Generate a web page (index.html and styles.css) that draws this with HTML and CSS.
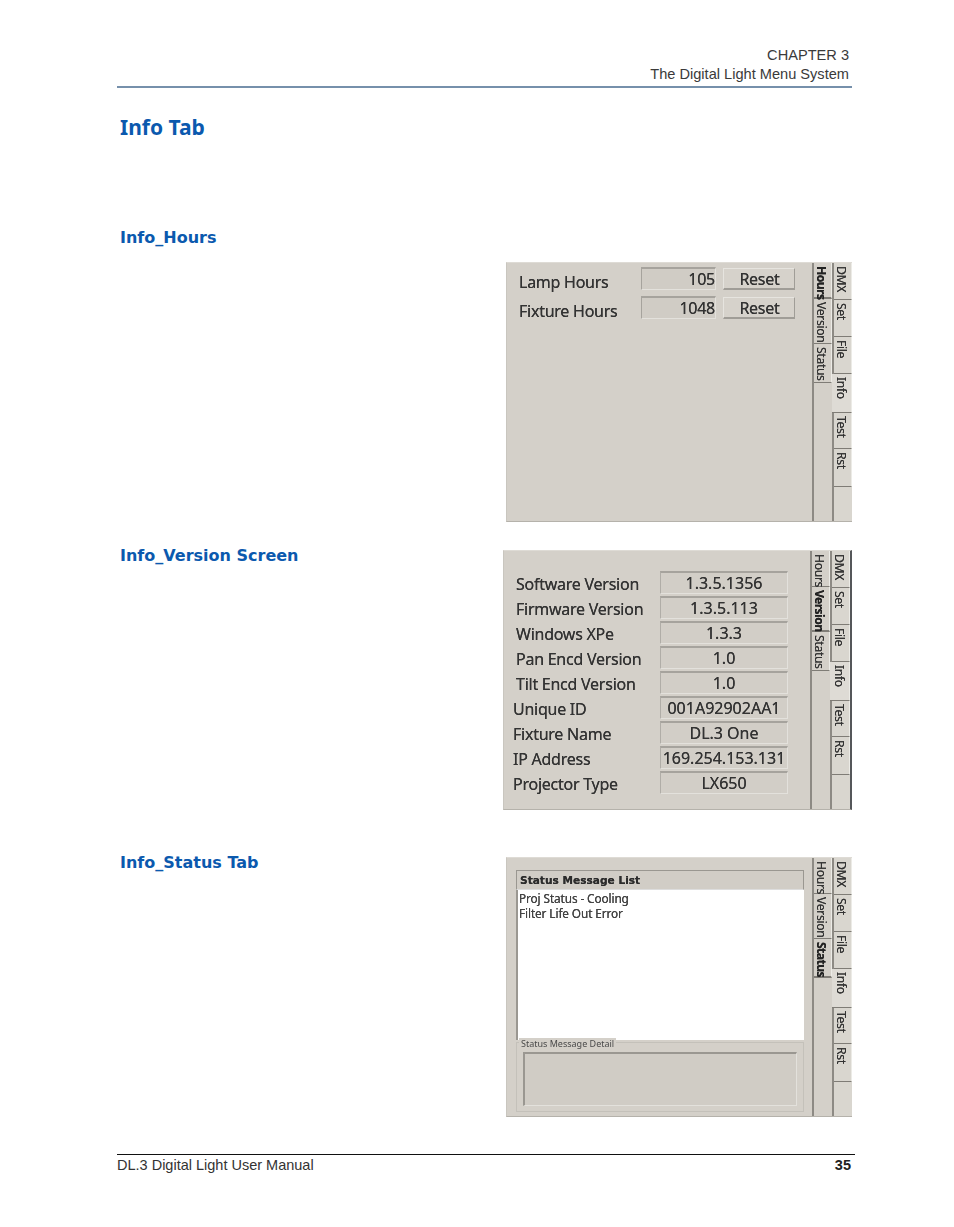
FILE: index.html
```html
<!DOCTYPE html>
<html lang="en">
<head>
<meta charset="utf-8">
<title>Info Tab</title>
<link rel="stylesheet" href="styles.css">
</head>
<body>
<div class="page">
  <header class="running-head">
    <div>CHAPTER 3</div>
    <div>The Digital Light Menu System</div>
  </header>
  <h1 class="title">Info Tab</h1>
  <h2 class="sub hours-head">Info_Hours</h2>
  <section class="hours-row">
    <div class="panel">
      <div class="main hours-main">
        <div class="hrow"><span class="hlabel">Lamp Hours</span><span class="hfield">105</span><span class="hbtn">Reset</span></div>
        <div class="hrow"><span class="hlabel">Fixture Hours</span><span class="hfield">1048</span><span class="hbtn">Reset</span></div>
      </div>
      <div class="subtabs">
        <div class="tab active">Hours</div><div class="tab">Version</div><div class="tab">Status</div>
      </div>
      <div class="tabs">
        <div class="tab">DMX</div><div class="tab">Set</div><div class="tab">File</div><div class="tab sel">Info</div><div class="tab">Test</div><div class="tab">Rst</div>
      </div>
    </div>
  </section>
  <section class="split version-row">
    <h2 class="sub">Info_Version Screen</h2>
    <div class="panel panel-wide">
      <div class="main version-main">
        <div class="vrow"><span class="vlabel">Software Version</span><span class="vfield">1.3.5.1356</span></div>
        <div class="vrow"><span class="vlabel">Firmware Version</span><span class="vfield">1.3.5.113</span></div>
        <div class="vrow"><span class="vlabel">Windows XPe</span><span class="vfield">1.3.3</span></div>
        <div class="vrow"><span class="vlabel">Pan Encd Version</span><span class="vfield">1.0</span></div>
        <div class="vrow"><span class="vlabel">Tilt Encd Version</span><span class="vfield">1.0</span></div>
        <div class="vrow out"><span class="vlabel">Unique ID</span><span class="vfield">001A92902AA1</span></div>
        <div class="vrow out"><span class="vlabel">Fixture Name</span><span class="vfield">DL.3 One</span></div>
        <div class="vrow out"><span class="vlabel">IP Address</span><span class="vfield">169.254.153.131</span></div>
        <div class="vrow out"><span class="vlabel">Projector Type</span><span class="vfield">LX650</span></div>
      </div>
      <div class="subtabs">
        <div class="tab">Hours</div><div class="tab active">Version</div><div class="tab">Status</div>
      </div>
      <div class="tabs">
        <div class="tab">DMX</div><div class="tab">Set</div><div class="tab">File</div><div class="tab sel">Info</div><div class="tab">Test</div><div class="tab">Rst</div>
      </div>
    </div>
  </section>
  <section class="split status-row">
    <h2 class="sub">Info_Status Tab</h2>
    <div class="panel">
      <div class="main status-main">
        <div class="list-head">Status Message List</div>
        <div class="list">
          <div>Proj Status - Cooling</div>
          <div>Filter Life Out Error</div>
        </div>
        <div class="detail">
          <span class="detail-label">Status Message Detail</span>
          <div class="detail-box"></div>
        </div>
      </div>
      <div class="subtabs">
        <div class="tab">Hours</div><div class="tab">Version</div><div class="tab active">Status</div>
      </div>
      <div class="tabs">
        <div class="tab">DMX</div><div class="tab">Set</div><div class="tab">File</div><div class="tab sel">Info</div><div class="tab">Test</div><div class="tab">Rst</div>
      </div>
    </div>
  </section>
  <footer class="foot">
    <span>DL.3 Digital Light User Manual</span>
    <strong>35</strong>
  </footer>
</div>
</body>
</html>
```
FILE: styles.css
```css
* { box-sizing: border-box; }
html, body { margin: 0; padding: 0; background: #fff; }
body { font-family: "Liberation Sans", Arial, sans-serif; color: #333; }
.page { width: 954px; height: 1227px; padding: 46px 102px 0 117px; overflow: hidden; }

.running-head { width: 735px; height: 42px; padding-right: 3px; border-bottom: 2px solid #7690ab; text-align: right; font-size: 14.6px; line-height: 19px; color: #3a3a3a; }

.title, .sub { margin: 0; color: #0b59ae; font-weight: 700; padding-left: 3px; }
.title { font-family: "Noto Sans", sans-serif; font-size: 21px; line-height: 30px; margin-top: 24px; }
.sub { font-family: "DejaVu Sans", sans-serif; font-size: 16px; line-height: 22px; }
.hours-head { margin-top: 85px; }

.hours-row { display: flex; justify-content: flex-end; width: 735px; margin-top: 13px; }
.split { display: flex; justify-content: space-between; align-items: flex-start; width: 735px; }
.split .sub { margin-top: -5px; }
.version-row { margin-top: 28px; }
.status-row { margin-top: 47px; }

.panel { display: flex; width: 346px; height: 260px; background: #d4d0c9; border-top: 1px solid #dedbd5; border-left: 1px solid #c9c6bf; border-bottom: 1px solid #b5b2ab; font-family: "Noto Sans", sans-serif; color: #333; }
.panel-wide { width: 349px; border-right: 2px solid #55575a; }
.main { flex: 1; min-width: 0; filter: blur(0.4px); text-shadow: 0 0 0.6px #333; }

.subtabs, .tabs { flex: none; display: flex; flex-direction: column; width: 20px; border-left: 2px solid #8d8a84; }
.tabs { background: #d9d6cf; }
.tab { flex: none; writing-mode: vertical-rl; font-size: 12.2px; letter-spacing: -0.35px; line-height: 17px; padding: 3px 1px 0 0; border-bottom: 1px solid #7f7c76; border-right: 1px solid #ecebe6; color: #333; filter: blur(0.3px); text-shadow: 0 0 0.5px #333; }
.subtabs .tab:nth-child(1) { height: 36px; }
.subtabs .tab:nth-child(2) { height: 45px; }
.subtabs .tab:nth-child(3) { height: 39px; }
.tabs .tab:nth-child(1) { height: 37px; }
.tabs .tab:nth-child(2) { height: 37px; }
.tabs .tab:nth-child(3) { height: 37px; }
.tabs .tab:nth-child(4) { height: 39px; }
.tabs .tab:nth-child(5) { height: 36px; }
.tabs .tab:nth-child(6) { height: 38px; }
.tab.active { font-weight: 700; color: #222; border-bottom-width: 2px; letter-spacing: -0.6px; }
.tab.sel { background: #dedbd5; margin-left: -2px; padding-left: 2px; }

.hours-main { padding: 1px 16px 0 12px; }
.hrow { display: flex; align-items: center; height: 29px; font-size: 16px; letter-spacing: -0.25px; }
.hlabel { width: 122px; padding-top: 6px; }
.hfield { width: 75px; height: 23px; line-height: 21px; text-align: right; padding-right: 0; background: #d0ccc5; border-top: 2px solid #a6a39d; border-left: 1px solid #a6a39d; border-bottom: 1px solid #e3e1dc; border-right: 1px solid #e3e1dc; }
.hbtn { width: 72px; height: 22px; margin-left: 7px; padding-left: 1px; line-height: 20px; text-align: center; background: #d6d2cb; border-top: 1px solid #e6e4df; border-left: 1px solid #e6e4df; border-bottom: 2px solid #a09d97; border-right: 1px solid #a09d97; }

.version-main { padding: 19px 22px 0 9px; }
.vrow { display: flex; align-items: center; height: 25px; font-size: 16px; padding-left: 3px; }
.vrow.out { padding-left: 0; }
.vlabel { flex: 1; padding-top: 3px; white-space: nowrap; letter-spacing: -0.25px; }
.vfield { flex: none; width: 128px; height: 23px; line-height: 20px; text-align: center; background: #d2cec7; border-top: 2px solid #a6a39d; border-left: 1px solid #b0ada7; border-bottom: 1px solid #e3e1dc; border-right: 1px solid #e3e1dc; }

.status-main { padding: 12px 8px 0 9px; display: flex; flex-direction: column; }
.list-head { height: 20px; line-height: 18px; font-weight: 700; padding-left: 3px; color: #2c2c2c; background: #d1cdc6; border: 1px solid #9a9791; border-bottom-color: #ddd; font-family: "DejaVu Sans", sans-serif; font-size: 10.6px; }
.list { height: 150px; background: #fff; border-left: 2px solid #9a9791; padding: 1px 1px; font-size: 11.8px; letter-spacing: -0.1px; line-height: 15px; color: #444; }
.detail { position: relative; height: 70px; margin-top: 2px; padding: 9px 6px 0 6px; border: 1px solid #c4c1ba; }
.detail-label { position: absolute; left: 2px; top: -5px; padding: 0 2px; font-size: 9px; line-height: 11px; background: #d4d0c9; color: #4a4a4a; text-shadow: none; }
.detail-box { height: 54px; background: #d0ccc5; border-top: 2px solid #9a9791; border-left: 2px solid #9a9791; border-right: 1px solid #e3e1dc; border-bottom: 1px solid #e3e1dc; }

.foot { display: flex; justify-content: space-between; width: 738px; margin-top: 37px; padding: 1px 4px 0 0; border-top: 1px solid #111; font-size: 14.5px; line-height: 18px; color: #333; }
.foot strong { color: #222; }
```
